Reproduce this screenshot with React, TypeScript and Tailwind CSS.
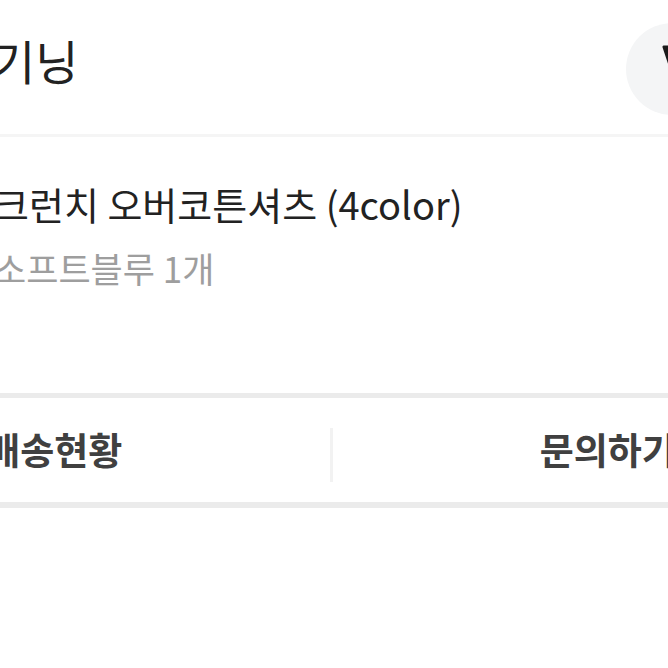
import React from "react";

const font = { fontFamily: '"Noto Sans CJK KR", "Noto Sans", sans-serif' };

export default function App() {
    return (
        <div className="w-[668px] h-[668px] overflow-hidden bg-white" style={font}>
            <div className="w-[1104px] ml-[-221px] flex flex-col">
                {/* header */}
                <div className="h-[134px] flex items-center justify-between pl-[213px]">
                    <span className="text-[47px] leading-none text-[#222] mb-[16px]">기닝</span>
                    <div className="w-[92px] h-[92px] rounded-full bg-[#f4f5f6] mr-[165px] mt-[4px]">
                        <svg viewBox="0 0 92 92" className="w-[92px] h-[92px]">
                            <path d="M38 24 L58 24 L48 54 Z" fill="#1a1a1a" stroke="#1a1a1a" strokeWidth="3" strokeLinejoin="round" />
                        </svg>
                    </div>
                </div>
                <div className="h-[3px] bg-[#f5f5f5]" />

                {/* product */}
                <div className="h-[256px] pl-[215px] pt-[42px] flex flex-col">
                    <span className="text-[38px] leading-[50px] text-[#222]">크런치 오버코튼셔츠 (4color)</span>
                    <span className="text-[35px] leading-[46px] text-[#9e9e9e] mt-[16px]">소프트블루 1개</span>
                </div>
                <div className="h-[5px] bg-[#ebebeb]" />

                {/* actions */}
                <div className="h-[104px] flex items-center">
                    <button className="flex-1 text-center text-[37px] font-semibold text-[#404040]">배송현황</button>
                    <div className="w-[3px] h-[54px] bg-[#f2f2f2] mt-[10px]" />
                    <button className="flex-1 text-center text-[37px] font-semibold text-[#404040]">문의하기</button>
                </div>
                <div className="h-[6px] bg-[#ebebeb]" />
            </div>
        </div>
    );
}
